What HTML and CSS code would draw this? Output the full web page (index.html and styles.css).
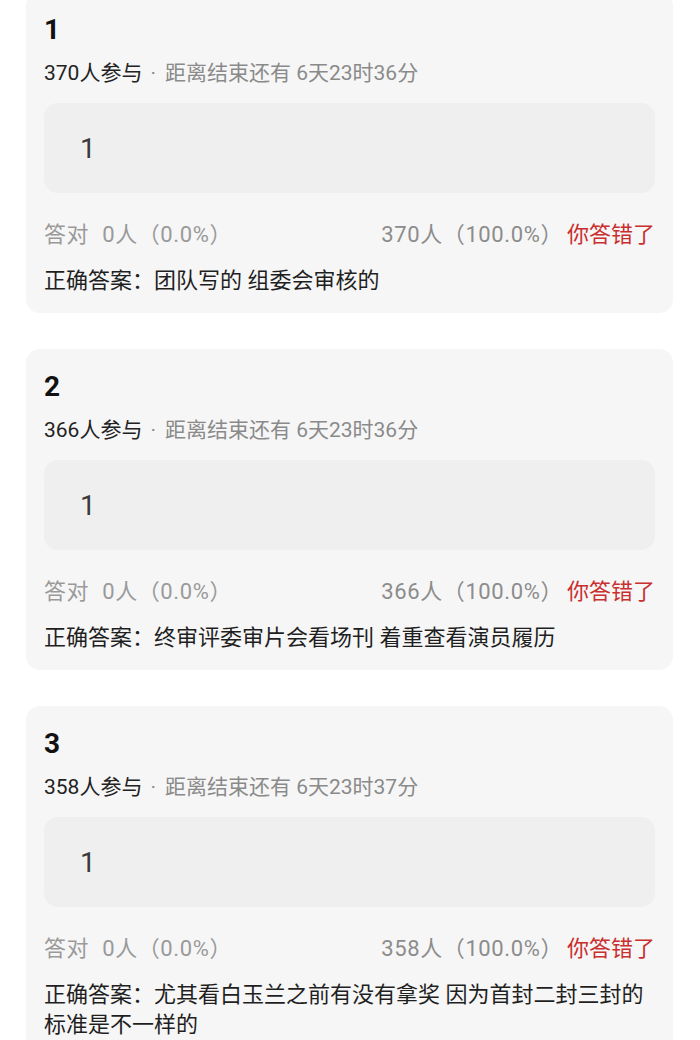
FILE: index.html
```html
<!DOCTYPE html>
<html lang="zh-CN">
<head>
  <meta charset="UTF-8">
  <title>答题结果</title>
  <link rel="stylesheet" href="styles.css">
</head>
<body>
  <div class="list">

    <div class="card">
      <div class="q-title">1</div>
      <div class="meta"><span class="count">370人参与</span><span class="dot">·</span>距离结束还有 6天23时36分</div>
      <div class="answer-box">1</div>
      <div class="stats">
        <div class="right-count"><span class="label">答对</span>0人（0.0%）</div>
        <div class="wrong-count">370人（100.0%）<span class="wrong">你答错了</span></div>
      </div>
      <div class="correct">正确答案：团队写的 组委会审核的</div>
    </div>

    <div class="card">
      <div class="q-title">2</div>
      <div class="meta"><span class="count">366人参与</span><span class="dot">·</span>距离结束还有 6天23时36分</div>
      <div class="answer-box">1</div>
      <div class="stats">
        <div class="right-count"><span class="label">答对</span>0人（0.0%）</div>
        <div class="wrong-count">366人（100.0%）<span class="wrong">你答错了</span></div>
      </div>
      <div class="correct">正确答案：终审评委审片会看场刊 着重查看演员履历</div>
    </div>

    <div class="card">
      <div class="q-title">3</div>
      <div class="meta"><span class="count">358人参与</span><span class="dot">·</span>距离结束还有 6天23时37分</div>
      <div class="answer-box">1</div>
      <div class="stats">
        <div class="right-count"><span class="label">答对</span>0人（0.0%）</div>
        <div class="wrong-count">358人（100.0%）<span class="wrong">你答错了</span></div>
      </div>
      <div class="correct">正确答案：尤其看白玉兰之前有没有拿奖 因为首封二封三封的标准是不一样的</div>
    </div>

  </div>
</body>
</html>
```

FILE: styles.css
```css
body {
  margin: 0;
  background: #fff;
  font-family: Roboto, "Noto Sans CJK SC", sans-serif;
  color: #1f1f1f;
}
.list {
  margin-top: -8px;
  padding: 0 27px 0 26px;
  display: flex;
  flex-direction: column;
  gap: 36px;
}
.card {
  background: #f6f6f6;
  border-radius: 14px;
  padding: 20px 18px 17px;
}
.q-title {
  font-size: 28px;
  font-weight: 700;
  line-height: 36px;
  color: #111;
}
.meta {
  margin-top: 11px;
  font-size: 21px;
  line-height: 28px;
  color: #8a8a8a;
}
.meta .count {
  color: #222;
}
.meta .dot {
  margin: 0 9px 0 8px;
}
.answer-box {
  margin-top: 16px;
  height: 90px;
  background: #efefef;
  border-radius: 14px;
  padding-left: 36px;
  display: flex;
  align-items: center;
  font-size: 28px;
  color: #3a3a3a;
}
.stats {
  margin-top: 27px;
  display: flex;
  justify-content: space-between;
  font-size: 22px;
  line-height: 30px;
  letter-spacing: 0.6px;
  color: #9a9a9a;
}
.stats .label {
  margin-right: 13px;
}
.wrong-count {
  color: #8c8c8c;
}
.wrong {
  margin-left: 4px;
  letter-spacing: 0;
  color: #c92f2f;
}
.correct {
  margin-top: 16px;
  font-size: 22px;
  line-height: 30px;
  color: #1f1f1f;
}
```
